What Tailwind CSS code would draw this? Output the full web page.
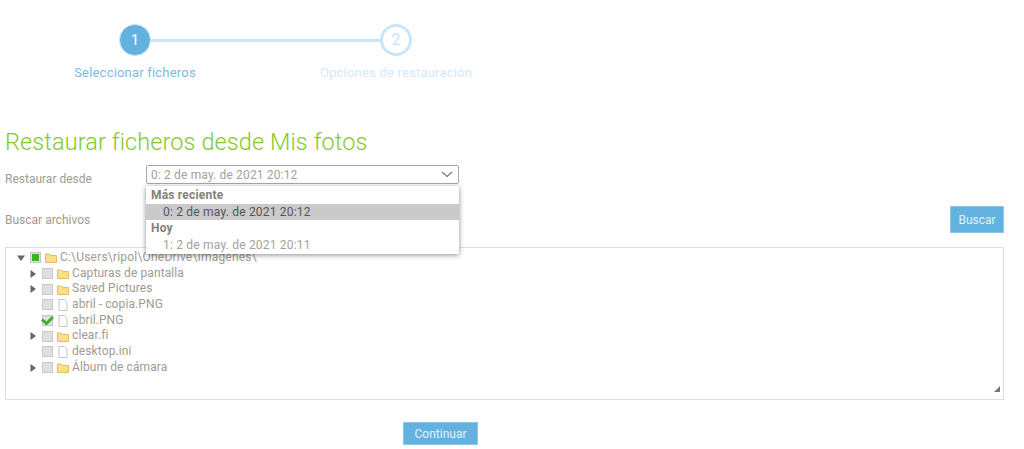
<!DOCTYPE html>
<html lang="es">
<head>
    <meta charset="UTF-8">
    <meta name="viewport" content="width=device-width, initial-scale=1.0">
    <title>Restaurar ficheros</title>
    <script src="https://cdn.jsdelivr.net/npm/@tailwindcss/browser@4"></script>
</head>
<body class="bg-white font-['Roboto',sans-serif] text-[12px] text-[#a09b92] h-[449px] overflow-hidden">
<!-- pasos -->
<div class="pt-6 h-[84px]">
    <div class="flex items-center pl-[119px]">
        <div class="w-8 h-8 rounded-full bg-[#62b1df] border border-[#c9e5f8] text-white text-[15px] flex items-center justify-center">1</div>
        <div class="w-[229px] h-[3px] bg-[#c9e5f8]"></div>
        <div class="w-8 h-8 rounded-full bg-white border-[3px] border-[#c9e5f8] text-[#c9e5f8] text-[16px] flex items-center justify-center">2</div>
    </div>
    <div class="flex mt-[8px] text-[13px] tracking-[0.2px] leading-[18px]">
        <div class="w-[160px] ml-[55px] text-center text-[#7abce4]">Seleccionar ficheros</div>
        <div class="w-[160px] ml-[101px] text-center text-[#d2e9f9]">Opciones de restauración</div>
    </div>
</div>

<div class="px-[5px] pt-[44px]">
    <h1 class="text-[23.5px] leading-[28px] font-light text-[#84c92c] tracking-[0.1px]">Restaurar ficheros desde Mis fotos</h1>

    <div class="relative flex items-start mt-[9px] h-[41px]">
        <label class="w-[141px] pt-[5px] leading-[18px]">Restaurar desde</label>
        <div class="w-[313px] h-[19px] border border-[#aaa] rounded-[2px] flex items-center justify-between pl-[4px] pr-[5px] leading-none tracking-[0.15px] text-[#a5a19a]">
            <span>0: 2 de may. de 2021 20:12</span>
            <svg width="12" height="7" viewBox="0 0 12 7" fill="none" stroke="#777" stroke-width="1.2"><path d="M1 1l5 4.5L11 1"/></svg>
        </div>
        <!-- desplegable abierto -->
        <div class="absolute left-[141px] top-[21px] w-[313px] h-[68px] bg-white shadow-[0_1px_5px_rgba(0,0,0,0.45)] z-10 leading-[17px] tracking-[0.2px]">
            <div class="h-[18px] pl-[5px] pt-[1px] font-bold text-[#85817a]">Más reciente</div>
            <div class="h-[16px] pl-[17px] bg-[#cacaca] text-[#555]">0: 2 de may. de 2021 20:12</div>
            <div class="h-[17px] pl-[5px] font-bold text-[#85817a]">Hoy</div>
            <div class="h-[17px] pl-[17px] text-[#a5a19a]">1: 2 de may. de 2021 20:11</div>
        </div>
    </div>

    <div class="flex items-center justify-between w-[999px] h-[27px]">
        <label class="leading-[18px]">Buscar archivos</label>
        <button class="w-[54px] h-[27px] bg-[#62b1df] border border-[#8cc8ec] text-[#e3f3fc] text-[12px]">Buscar</button>
    </div>

    <!-- arbol -->
    <div class="relative mt-[14px] w-[999px] h-[153px] border border-[#e0e0e0] pt-[2px] pl-[10px] leading-[15.7px] tracking-[0.1px]">
        <div class="flex items-center h-[15.7px]">
            <svg class="w-[10px] h-[10px] mr-[4px]" viewBox="0 0 10 10"><path d="M1 2.5h8L5 8z" fill="#666"/></svg>
            <span class="w-[11px] h-[11px] bg-[#e0e0e0] border border-[#c8c8c8] flex items-center justify-center mr-[4px]"><span class="w-[7px] h-[7px] bg-[#3fae2a]"></span></span>
            <svg class="w-[12px] h-[11px] mr-[3px]" viewBox="0 0 12 11"><path d="M.5 2h4l1 1.5h6v7H.5z" fill="#fae08c" stroke="#e5bc62"/></svg>
            <span class="tracking-[0.2px]">C:\Users\ripol\OneDrive\Imagenes\</span>
        </div>
        <div class="flex items-center h-[15.7px] pl-[12px]">
            <svg class="w-[10px] h-[10px] mr-[4px]" viewBox="0 0 10 10"><path d="M2.5 1v8L8 5z" fill="#666"/></svg>
            <span class="w-[11px] h-[11px] bg-[#e0e0e0] border border-[#c8c8c8] mr-[4px]"></span>
            <svg class="w-[12px] h-[11px] mr-[3px]" viewBox="0 0 12 11"><path d="M.5 2h4l1 1.5h6v7H.5z" fill="#fae08c" stroke="#e5bc62"/></svg>
            <span>Capturas de pantalla</span>
        </div>
        <div class="flex items-center h-[15.7px] pl-[12px]">
            <svg class="w-[10px] h-[10px] mr-[4px]" viewBox="0 0 10 10"><path d="M2.5 1v8L8 5z" fill="#666"/></svg>
            <span class="w-[11px] h-[11px] bg-[#e0e0e0] border border-[#c8c8c8] mr-[4px]"></span>
            <svg class="w-[12px] h-[11px] mr-[3px]" viewBox="0 0 12 11"><path d="M.5 2h4l1 1.5h6v7H.5z" fill="#fae08c" stroke="#e5bc62"/></svg>
            <span>Saved Pictures</span>
        </div>
        <div class="flex items-center h-[15.7px] pl-[26px]">
            <span class="w-[11px] h-[11px] bg-[#e0e0e0] border border-[#c8c8c8] mr-[4px]"></span>
            <svg class="w-[12px] h-[12px] mr-[3px]" viewBox="0 0 12 12"><path d="M2 .5h5.500l2.500 2.500v8.500h-8z" fill="#fff" stroke="#c4c4c4"/></svg>
            <span>abril - copia.PNG</span>
        </div>
        <div class="flex items-center h-[15.7px] pl-[26px]">
            <span class="relative w-[11px] h-[11px] bg-[#e0e0e0] border border-[#c8c8c8] mr-[4px]">
                <svg class="absolute -left-[2px] -top-[1px] w-[13px] h-[11px]" viewBox="0 0 13 11" fill="none" stroke="#3fae2a" stroke-width="3"><path d="M1 4.500l4.500 4L12 2"/></svg>
            </span>
            <svg class="w-[12px] h-[12px] mr-[3px]" viewBox="0 0 12 12"><path d="M2 .5h5.500l2.500 2.500v8.500h-8z" fill="#fff" stroke="#c4c4c4"/></svg>
            <span>abril.PNG</span>
        </div>
        <div class="flex items-center h-[15.7px] pl-[12px]">
            <svg class="w-[10px] h-[10px] mr-[4px]" viewBox="0 0 10 10"><path d="M2.5 1v8L8 5z" fill="#666"/></svg>
            <span class="w-[11px] h-[11px] bg-[#e0e0e0] border border-[#c8c8c8] mr-[4px]"></span>
            <svg class="w-[12px] h-[11px] mr-[3px]" viewBox="0 0 12 11"><path d="M.5 2h4l1 1.5h6v7H.5z" fill="#fae08c" stroke="#e5bc62"/></svg>
            <span>clear.fi</span>
        </div>
        <div class="flex items-center h-[15.7px] pl-[26px]">
            <span class="w-[11px] h-[11px] bg-[#e0e0e0] border border-[#c8c8c8] mr-[4px]"></span>
            <svg class="w-[12px] h-[12px] mr-[3px]" viewBox="0 0 12 12"><path d="M2 .5h5.500l2.500 2.500v8.500h-8z" fill="#fff" stroke="#c4c4c4"/></svg>
            <span>desktop.ini</span>
        </div>
        <div class="flex items-center h-[15.7px] pl-[12px]">
            <svg class="w-[10px] h-[10px] mr-[4px]" viewBox="0 0 10 10"><path d="M2.5 1v8L8 5z" fill="#666"/></svg>
            <span class="w-[11px] h-[11px] bg-[#e0e0e0] border border-[#c8c8c8] mr-[4px]"></span>
            <svg class="w-[12px] h-[11px] mr-[3px]" viewBox="0 0 12 11"><path d="M.5 2h4l1 1.5h6v7H.5z" fill="#fae08c" stroke="#e5bc62"/></svg>
            <span>Álbum de cámara</span>
        </div>
        <svg class="absolute right-[3px] bottom-[7px] w-[6px] h-[6px]" viewBox="0 0 6 6"><path d="M6 0v6H0z" fill="#777"/></svg>
    </div>

    <div class="mt-[22px] pl-[398px]">
        <button class="w-[75px] h-[23px] bg-[#62b1df] border border-[#8cc8ec] text-[#e3f3fc] text-[12px]">Continuar</button>
    </div>
</div>
</body>
</html>
